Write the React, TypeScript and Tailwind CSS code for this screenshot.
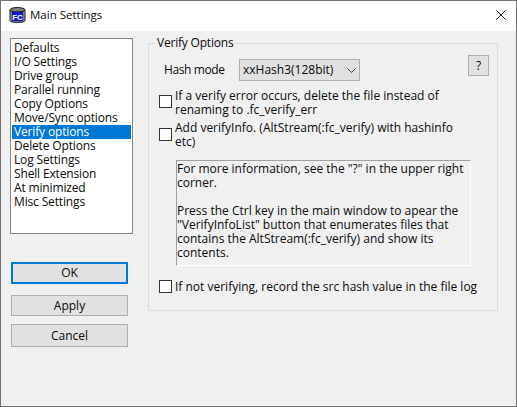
const items = [
  "Defaults",
  "I/O Settings",
  "Drive group",
  "Parallel running",
  "Copy Options",
  "Move/Sync options",
  "Verify options",
  "Delete Options",
  "Log Settings",
  "Shell Extension",
  "At minimized",
  "Misc Settings",
];

function FcIcon() {
  return (
    <svg width="17" height="16" viewBox="0 0 17 16" className="shrink-0">
      <path d="M1 3V13.500C1 14.800 4 15.500 8.500 15.500S16 14.800 16 13.500V3" fill="#a8a8a8" stroke="#1a1a1a" />
      <ellipse cx="8.500" cy="2.800" rx="7.500" ry="2.300" fill="#7c7c7c" stroke="#1a1a1a" />
      <rect x="3" y="5" width="11" height="9" fill="#1818e8" stroke="#0a0a50" strokeWidth="0.6" />
      <text x="8.500" y="12.500" textAnchor="middle" fontSize="8" fontWeight="700" fill="#fff" fontFamily="Liberation Sans, sans-serif">
        FC
      </text>
    </svg>
  );
}

function Check({ children, top, box }: { children: React.ReactNode; top: string; box: string }) {
  return (
    <div className={`flex items-start gap-[3px] ${top}`}>
      <span className={`h-[13px] w-[13px] shrink-0 border border-[#333333] bg-white ${box}`} />
      <span className="leading-[14px]">{children}</span>
    </div>
  );
}

export default function App() {
  return (
    <div className="flex h-[407px] w-[517px] flex-col overflow-hidden border border-[#707070] bg-[#f0f0f0] font-['Open_Sans','Noto_Sans',sans-serif] text-[12px] text-[#0a0a0a]">
      {/* Title bar */}
      <div className="flex h-[30px] shrink-0 items-center bg-white pb-[2px] pl-[8px] pr-[10px]">
        <FcIcon />
        <span className="ml-[4px] text-[11.5px]">Main Settings</span>
        <svg width="10" height="10" viewBox="0 0 10 10" className="ml-auto" stroke="#111" fill="none">
          <path d="M.3 .3L9.700 9.700M9.700 .3L.3 9.700" />
        </svg>
      </div>

      <div className="flex flex-1 pl-[9px] pt-[7px]">
        {/* Left column */}
        <div className="flex w-[124px] flex-col">
          <div className="h-[196px] w-[123px] border border-[#828790] bg-white px-[1px] pt-[2px] tracking-[-0.15px]">
            {items.map((item) => (
              <div
                key={item}
                className={
                  "h-[14px] pl-[2px] leading-[14px] " +
                  (item === "Verify options" ? "bg-[#0078d7] text-white" : "")
                }
              >
                {item}
              </div>
            ))}
          </div>
          <div className="ml-[1px] mt-[28px] flex h-[22px] w-[117px] items-center justify-center border-2 border-[#0078d7] bg-[#e1e1e1]">
            OK
          </div>
          <div className="ml-[1px] mt-[11px] flex h-[21px] w-[117px] items-center justify-center border border-[#adadad] bg-[#e1e1e1]">
            Apply
          </div>
          <div className="ml-[1px] mt-[8px] flex h-[23px] w-[117px] items-center justify-center border border-[#adadad] bg-[#e1e1e1]">
            Cancel
          </div>
        </div>

        {/* Group box */}
        <div className="relative ml-[14px] mt-[5px] h-[268px] w-[350px] border border-[#dcdcdc] pl-[10px]">
          <span className="absolute left-[7px] top-[-8px] bg-[#f0f0f0] px-[1px] leading-[14px] tracking-[-0.2px]">
            Verify Options
          </span>
          <div className="mt-[15px] flex items-center">
            <span className="ml-[5px] w-[75px] tracking-[-0.4px]">Hash mode</span>
            <div className="flex h-[22px] w-[121px] items-center justify-between border border-[#adadad] bg-[#e1e1e1] pl-[3px] pr-[3px]">
              <span>xxHash3(128bit)</span>
              <svg width="9" height="5" viewBox="0 0 9 5" fill="none" stroke="#444">
                <path d="M.5 .5L4.500 4.500L8.500 .5" />
              </svg>
            </div>
            <div className="ml-[108px] mt-[-9px] flex h-[21px] w-[21px] items-center justify-center border border-[#adadad] bg-[#e1e1e1]">
              ?
            </div>
          </div>
          <Check top="mt-[8px]" box="mt-[6px]">
            If a verify error occurs, delete the file instead of
            <br />
            renaming to .fc_verify_err
          </Check>
          <Check top="mt-[4px]" box="mt-[7px]">
            Add verifyInfo. (AltStream(:fc_verify) with hashinfo
            <br />
            etc)
          </Check>
          <div className="ml-[17px] mt-[11px] h-[106px] w-[295px] border border-b-white border-l-[#a0a0a0] border-r-white border-t-[#a0a0a0] pt-[1px] leading-[14px]">
            For more information, see the "?" in the upper right
            <br />
            corner.
            <br />
            <br />
            Press the Ctrl key in the main window to apear the
            <br />
            "VerifyInfoList" button that enumerates files that
            <br />
            contains the AltStream(:fc_verify) and show its
            <br />
            contents.
          </div>
          <Check top="mt-[14px]" box="">
            If not verifying, record the src hash value in the file log
          </Check>
        </div>
      </div>
    </div>
  );
}
